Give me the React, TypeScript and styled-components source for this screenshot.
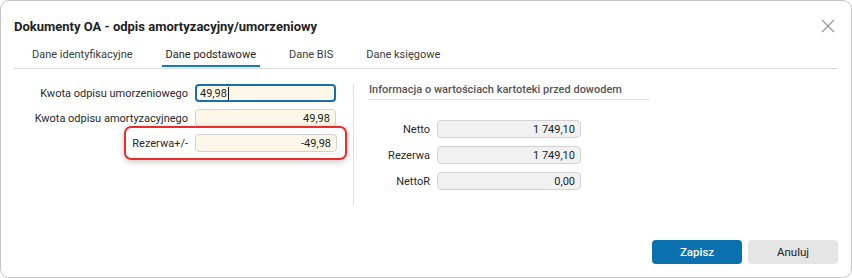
import * as React from 'react'
import styled, { createGlobalStyle } from 'styled-components'

const GlobalStyle = createGlobalStyle`
  html, body {
    margin: 0;
    padding: 0;
    background: #ffffff;
  }
  body {
    font-family: Roboto, 'Liberation Sans', Arial, sans-serif;
    color: #222;
  }
  * {
    box-sizing: border-box;
  }
`

const Dialog = styled.div`
  width: 852px;
  height: 278px;
  border: 1px solid #c6c6c6;
  border-radius: 9px;
  background: #fff;
  display: flex;
  flex-direction: column;
  overflow: hidden;
`

const Header = styled.div`
  height: 46px;
  padding: 4px 14px 0 13px;
  display: flex;
  align-items: center;
  justify-content: space-between;
`

const Title = styled.h1`
  margin: 0;
  font-size: 13px;
  font-weight: 700;
  color: #222;
`

const CloseButton = styled.button`
  border: 0;
  background: transparent;
  padding: 0;
  width: 14px;
  height: 14px;
  display: flex;
  cursor: pointer;
  margin-right: 2px;
`

const TabBar = styled.div`
  margin: 0 13px;
  padding-left: 14px;
  height: 22px;
  display: flex;
  align-items: flex-start;
  gap: 25px;
  border-bottom: 1px solid #dcdcdc;
`

const Tab = styled.div<{ active?: boolean }>`
  height: 20px;
  padding: 0 4px;
  font-size: 11px;
  line-height: 16px;
  color: ${({ active }) => (active ? '#1e1e1e' : '#3c3c3c')};
  border-bottom: 2px solid ${({ active }) => (active ? '#137ac0' : 'transparent')};
  cursor: pointer;
  white-space: nowrap;
`

const Body = styled.div`
  flex: 1;
  display: flex;
  padding: 15px 0 0 13px;
`

const LeftColumn = styled.div`
  width: 340px;
  height: 121px;
  border-right: 1px solid #e0e0e0;
  display: flex;
  flex-direction: column;
  gap: 7px;
`

const RightColumn = styled.div`
  padding-left: 14px;
  display: flex;
  flex-direction: column;
`

const SectionTitle = styled.div`
  width: 282px;
  height: 16px;
  font-size: 11px;
  font-weight: 500;
  color: #555;
  line-height: 12px;
  border-bottom: 1px solid #e2e2e2;
  padding-left: 1px;
  margin-bottom: 20px;
`

const FieldList = styled.div`
  display: flex;
  flex-direction: column;
  gap: 8px;
`

const Row = styled.div<{ labelWidth: number }>`
  position: relative;
  width: fit-content;
  display: grid;
  grid-template-columns: ${({ labelWidth }) => labelWidth}px auto;
  column-gap: 7px;
  align-items: center;
`

const Label = styled.label`
  text-align: right;
  font-size: 11px;
  color: #2a2a2a;
  white-space: nowrap;
`

const Field = styled.div<{ variant: 'edit' | 'focus' | 'info'; width: number }>`
  width: ${({ width }) => width}px;
  height: 18px;
  border-radius: 4px;
  border: ${({ variant }) => (variant === 'focus' ? '2px solid #1a6fa8' : '1px solid #d2d2d2')};
  background: ${({ variant }) => (variant === 'info' ? '#f1f1f1' : '#fdf7ea')};
  font-size: 11px;
  color: #1e1e1e;
  display: flex;
  align-items: center;
  justify-content: ${({ variant }) => (variant === 'focus' ? 'flex-start' : 'flex-end')};
  padding: ${({ variant }) => (variant === 'focus' ? '0 0 0 3px' : '0 5px 0 0')};
  white-space: nowrap;
`

const Caret = styled.span`
  display: inline-block;
  width: 1px;
  height: 13px;
  background: #111;
  margin-left: 1px;
`

const Highlight = styled.div`
  position: absolute;
  left: 110px;
  right: -10px;
  top: -8px;
  bottom: -8px;
  border: 2px solid #ee2a2a;
  border-radius: 7px;
  box-shadow: 0 2px 6px rgba(0, 0, 0, 0.22);
  pointer-events: none;
`

const Footer = styled.div`
  display: flex;
  justify-content: flex-end;
  gap: 6px;
  padding: 0 13px 13px 0;
`

const Button = styled.button<{ primary?: boolean }>`
  width: 90px;
  height: 24px;
  border: 0;
  border-radius: 4px;
  font-family: Roboto, 'Liberation Sans', Arial, sans-serif;
  font-size: 11.5px;
  font-weight: ${({ primary }) => (primary ? 500 : 400)};
  color: ${({ primary }) => (primary ? '#fff' : '#222')};
  background: ${({ primary }) => (primary ? '#0a70b0' : '#e5e5e5')};
  cursor: pointer;
`

const tabs = ['Dane identyfikacyjne', 'Dane podstawowe', 'Dane BIS', 'Dane księgowe']

const infoFields = [
  { label: 'Netto', value: '1 749,10' },
  { label: 'Rezerwa', value: '1 749,10' },
  { label: 'NettoR', value: '0,00' },
]

export default function App() {
  return (
    <>
      <GlobalStyle />
      <Dialog>
        <Header>
          <Title>Dokumenty OA - odpis amortyzacyjny/umorzeniowy</Title>
          <CloseButton aria-label="Zamknij">
            <svg width="14" height="14" viewBox="0 0 14 14">
              <path d="M1 1 L13 13 M13 1 L1 13" stroke="#9a9a9a" strokeWidth="1.3" fill="none" />
            </svg>
          </CloseButton>
        </Header>
        <TabBar>
          {tabs.map((t) => (
            <Tab key={t} active={t === 'Dane podstawowe'}>
              {t}
            </Tab>
          ))}
        </TabBar>
        <Body>
          <LeftColumn>
            <Row labelWidth={174}>
              <Label>Kwota odpisu umorzeniowego</Label>
              <Field variant="focus" width={141}>
                49,98
                <Caret />
              </Field>
            </Row>
            <Row labelWidth={174}>
              <Label>Kwota odpisu amortyzacyjnego</Label>
              <Field variant="edit" width={141}>
                49,98
              </Field>
            </Row>
            <Row labelWidth={174}>
              <Label>Rezerwa+/-</Label>
              <Field variant="edit" width={142}>
                -49,98
              </Field>
              <Highlight />
            </Row>
          </LeftColumn>
          <RightColumn>
            <SectionTitle>Informacja o wartościach kartoteki przed dowodem</SectionTitle>
            <FieldList>
              {infoFields.map((f) => (
                <Row key={f.label} labelWidth={62}>
                  <Label>{f.label}</Label>
                  <Field variant="info" width={144}>
                    {f.value}
                  </Field>
                </Row>
              ))}
            </FieldList>
          </RightColumn>
        </Body>
        <Footer>
          <Button primary>Zapisz</Button>
          <Button>Anuluj</Button>
        </Footer>
      </Dialog>
    </>
  )
}
